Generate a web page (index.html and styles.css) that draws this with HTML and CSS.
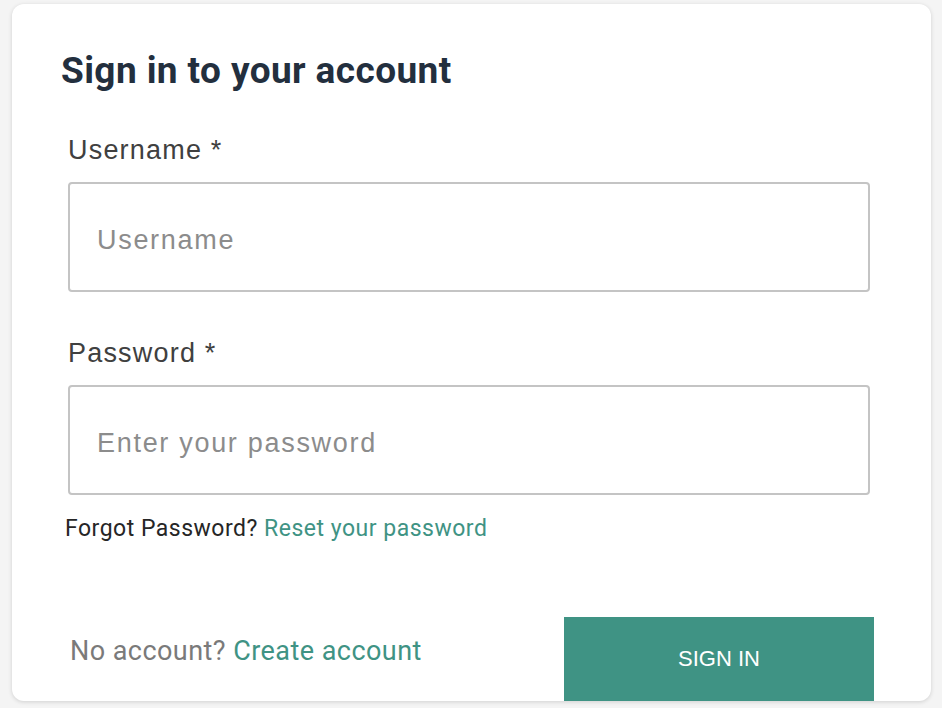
FILE: index.html
```html
<!DOCTYPE html>
<html lang="en">
<head>
  <meta charset="UTF-8">
  <meta name="viewport" content="width=device-width, initial-scale=1.0">
  <title>Sign in</title>
  <link rel="stylesheet" href="styles.css">
</head>
<body>
  <div class="signin-card">
    <h2 class="signin-title">Sign in to your account</h2>
    <form action="#" class="signin-form">
      <div class="field">
        <label for="username">Username *</label>
        <input type="text" id="username" name="username" placeholder="Username">
      </div>
      <div class="field">
        <label for="password">Password *</label>
        <input type="password" id="password" name="password" placeholder="Enter your password">
      </div>
      <p class="hint">Forgot Password? <a href="#">Reset your password</a></p>
      <div class="signin-footer">
        <p class="footer-text">No account? <a href="#">Create account</a></p>
        <button type="button" class="signin-btn">SIGN IN</button>
      </div>
    </form>
  </div>
</body>
</html>
```

FILE: styles.css
```css
/* light grey page behind the card */
body {
  margin: 0;
  background-color: #f4f4f4;
  font-family: "Liberation Sans", Arial, sans-serif;
  padding: 4px 11px 0 12px;
  height: 708px;
  box-sizing: border-box;
  overflow: hidden;
}

.signin-card {
  background: #fff;
  border-radius: 12px;
  box-shadow: 0 1px 4px rgba(0, 0, 0, 0.15);
  padding: 42px 0 0 49px;
  height: 697px;
  box-sizing: border-box;
  overflow: hidden;
}

.signin-title {
  margin: 0 0 36px;
  font-family: Roboto, sans-serif;
  font-weight: 700;
  font-size: 37px;
  line-height: 50px;
  color: #232f3e;
  letter-spacing: 0.4px;
}

.field {
  padding-left: 7px;
  margin-bottom: 43px;
}

.field + .field {
  margin-bottom: 20px;
}

.field label {
  display: block;
  font-size: 27px;
  line-height: 36px;
  letter-spacing: 1.2px;
  color: #404040;
  margin-bottom: 14px;
}

.field input {
  display: block;
  width: 802px;
  height: 110px;
  box-sizing: border-box;
  border: 2px solid #c4c4c4;
  border-radius: 4px;
  padding: 6px 27px 0;
  font-family: "Liberation Sans", Arial, sans-serif;
  font-size: 27px;
  letter-spacing: 1.7px;
  color: #333;
}

.field input::placeholder {
  color: #8c8c8c;
}

.hint {
  margin: 0 0 0 4px;
  font-family: Roboto, sans-serif;
  font-size: 23px;
  letter-spacing: 0.5px;
  color: #262626;
}

a {
  color: #3f9384;
  text-decoration: none;
}

.signin-footer {
  display: flex;
  justify-content: space-between;
  align-items: flex-start;
  margin-top: 75px;
  padding-left: 9px;
  width: 804px;
}

.footer-text {
  margin: 18px 0 0;
  font-family: Roboto, sans-serif;
  font-size: 27px;
  letter-spacing: 0.45px;
  color: #7a7a7a;
}

.signin-btn {
  width: 310px;
  height: 90px;
  padding-bottom: 8px;
  border: none;
  background-color: #3f9384;
  color: #fff;
  font-family: "Liberation Sans", Arial, sans-serif;
  font-size: 22px;
}
```
